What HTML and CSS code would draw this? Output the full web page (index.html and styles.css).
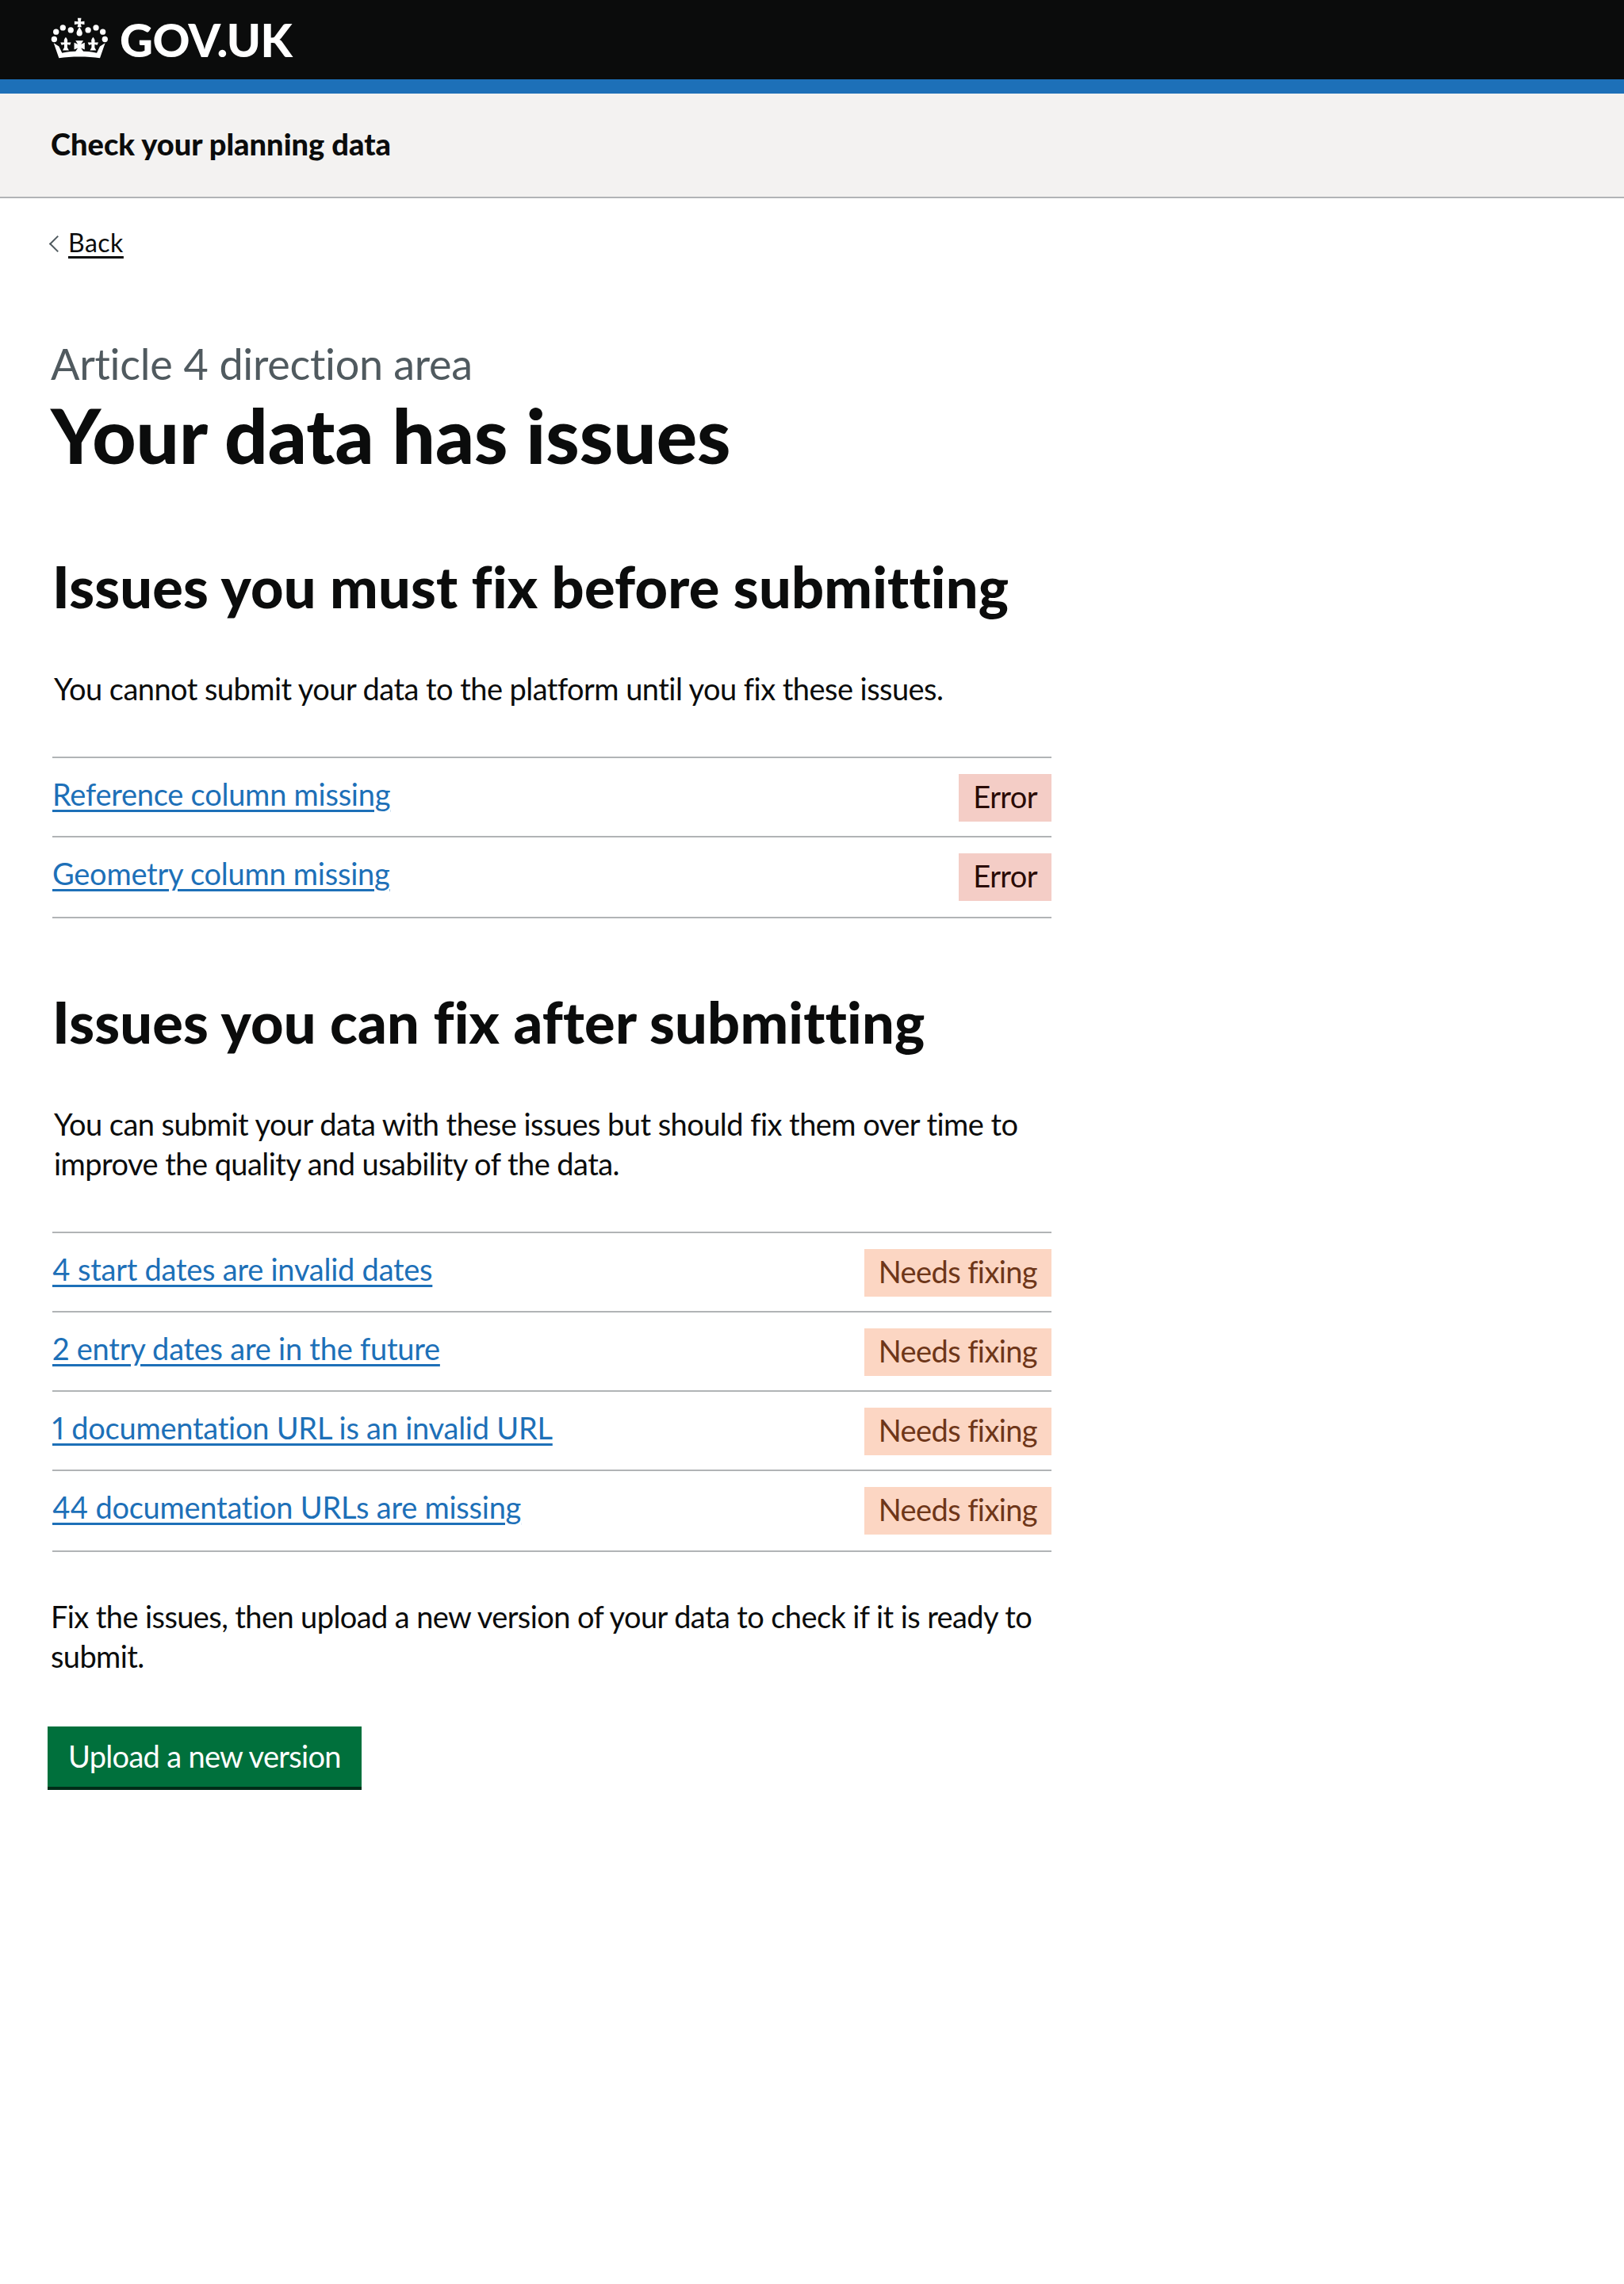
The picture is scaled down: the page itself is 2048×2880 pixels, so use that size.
FILE: index.html
```html
<!DOCTYPE html>
<html lang="en">
<head>
  <meta charset="UTF-8" />
  <title>Your data has issues - Check your planning data</title>
  <link rel="stylesheet" href="styles.css">
</head>
<body>

  <header class="site-header">
    <a href="#" class="logo">
      <svg class="crown" viewBox="72 35 218 157" aria-hidden="true">
        <path d="M173 37h14l-2 14 14-2v13l-14-2 3 12h-16l3-12-14 2V49l14 2z"/>
        <path d="M180 71c7 12 11 17 11 24a11 11 0 0 1-22 0c0-7 4-12 11-24z"/>
        <circle cx="84" cy="118" r="11"/><circle cx="91" cy="90" r="11"/>
        <circle cx="117" cy="74" r="11"/><circle cx="147" cy="83" r="11"/>
        <circle cx="213" cy="83" r="11"/><circle cx="243" cy="74" r="11"/>
        <circle cx="269" cy="90" r="11"/><circle cx="277" cy="118" r="11"/>
        <path d="M82 132l20 13 12 25c40-9 92-9 132 0l12-25 20-13-20 58c-45-7-111-7-156 0z"/>
        <path d="M128 110c6 8 8 12 6 20l14 0-4 10-10-2 0 12 6 10h-24l6-10 0-12-10 2-4-10 14 0c-2-8 0-12 6-20z"/>
        <path d="M232 110c6 8 8 12 6 20l14 0-4 10-10-2 0 12 6 10h-24l6-10 0-12-10 2-4-10 14 0c-2-8 0-12 6-20z"/>
        <path d="M165 123h30l-9 14 14-6v26l-14-6 9 14h-30l9-14-14 6v-26l14 6z"/>
      </svg>
      <span class="logo-text">GOV.UK</span>
    </a>
  </header>

  <div class="service-bar">
    <a href="#" class="service-name">Check your planning data</a>
  </div>

  <main class="container">
    <a href="#" class="back-link">Back</a>

    <div class="content">
      <span class="caption">Article 4 direction area</span>
      <h1>Your data has issues</h1>

      <section class="issues issues-must">
        <h2>Issues you must fix before submitting</h2>
        <p class="intro">You cannot submit your data to the platform until you fix these issues.</p>
        <ul class="issue-list">
          <li class="issue-row">
            <a href="#">Reference column missing</a>
            <strong class="tag tag-error">Error</strong>
          </li>
          <li class="issue-row">
            <a href="#">Geometry column missing</a>
            <strong class="tag tag-error">Error</strong>
          </li>
        </ul>
      </section>

      <section class="issues issues-can">
        <h2>Issues you can fix after submitting</h2>
        <p class="intro">You can submit your data with these issues but should fix them over time to improve the quality and usability of the data.</p>
        <ul class="issue-list">
          <li class="issue-row">
            <a href="#">4 start dates are invalid dates</a>
            <strong class="tag tag-warning">Needs fixing</strong>
          </li>
          <li class="issue-row">
            <a href="#">2 entry dates are in the future</a>
            <strong class="tag tag-warning">Needs fixing</strong>
          </li>
          <li class="issue-row">
            <a href="#">1 documentation URL is an invalid URL</a>
            <strong class="tag tag-warning">Needs fixing</strong>
          </li>
          <li class="issue-row">
            <a href="#">44 documentation URLs are missing</a>
            <strong class="tag tag-warning">Needs fixing</strong>
          </li>
        </ul>
      </section>

      <p class="next-step">Fix the issues, then upload a new version of your data to check if it is ready to submit.</p>
      <a href="#" class="button">Upload a new version</a>
    </div>
  </main>

</body>
</html>
```

FILE: styles.css
```css
body {
  margin: 0;
  font-family: Lato, "Noto Sans", Arial, sans-serif;
  font-size: 38px;
  line-height: 50px;
  font-variant-ligatures: none;
  font-variant-numeric: proportional-nums;
  color: #0b0c0c;
  background: white;
}

a {
  color: inherit;
}

.site-header {
  height: 100px;
  padding-left: 64px;
  background: #0b0c0c;
  border-bottom: 18px solid #1d70b8;
}

.logo {
  display: flex;
  align-items: center;
  gap: 14px;
  height: 100px;
  color: white;
  text-decoration: none;
}

.crown {
  width: 73px;
  height: 52px;
  fill: white;
  margin-bottom: 4px;
}

.logo-text {
  font-size: 58px;
  font-weight: 900;
  line-height: 1;
  letter-spacing: -.6px;
}

.service-bar {
  height: 126px;
  padding: 0 0 4px 64px;
  background: #f3f2f1;
  border-bottom: 2px solid #b1b4b6;
  display: flex;
  align-items: center;
}

.service-name {
  font-size: 38px;
  font-weight: 900;
  letter-spacing: 0;
  text-decoration: none;
}

.container {
  padding-left: 64px;
  max-width: 1262px;
}

.back-link {
  display: inline-block;
  position: relative;
  margin-top: 36px;
  margin-left: 22px;
  font-size: 32px;
  line-height: 40px;
  letter-spacing: .5px;
  text-underline-offset: 5px;
}

.back-link::before {
  content: "";
  position: absolute;
  left: -21px;
  top: 14px;
  width: 13px;
  height: 13px;
  border-left: 2px solid #505a5f;
  border-bottom: 2px solid #505a5f;
  transform: rotate(45deg);
}

.content {
  margin-top: 101px;
}

.caption {
  display: block;
  margin-bottom: 9px;
  font-size: 54px;
  line-height: 60px;
  letter-spacing: -.3px;
  color: #505a5f;
}

h1 {
  margin: 0;
  font-size: 96px;
  line-height: 100px;
  font-weight: 900;
  letter-spacing: 0;
}

.issues {
  padding-left: 2px;
}

h2 {
  margin: 0;
  font-size: 72px;
  line-height: 80px;
  font-weight: 900;
  letter-spacing: .2px;
}

.issues-must {
  margin-top: 101px;
}

.issues-can {
  margin-top: 90px;
}

.intro {
  margin: 64px 0 0;
  padding-left: 2px;
  letter-spacing: -.55px;
}

.issue-list {
  list-style: none;
  margin: 61px 0 0;
  padding: 0;
  border-top: 2px solid #b1b4b6;
}

.issue-row {
  display: flex;
  justify-content: space-between;
  align-items: flex-start;
  height: 98px;
  border-bottom: 2px solid #b1b4b6;
}

.issue-row:last-child {
  height: 100px;
}

.issue-row a {
  color: #1d70b8;
  margin-top: 20px;
  letter-spacing: -.25px;
  text-underline-offset: 5px;
}

.tag {
  margin-top: 20px;
  padding: 0 18px;
  height: 60px;
  line-height: 57px;
  font-weight: 400;
  letter-spacing: -.6px;
}

.tag-error {
  background: #f4cdc6;
  color: #2a0b06;
}

.tag-warning {
  background: #fcd6c3;
  color: #6e3619;
}

.next-step {
  margin: 56px 0 0;
  width: 1262px;
  letter-spacing: -.6px;
}

.button {
  display: inline-block;
  margin: 64px 0 0 -4px;
  padding: 0 26px;
  height: 76px;
  line-height: 74px;
  letter-spacing: -.7px;
  background: #00703c;
  color: white;
  text-decoration: none;
  border-bottom: 4px solid #002d18;
}
```
